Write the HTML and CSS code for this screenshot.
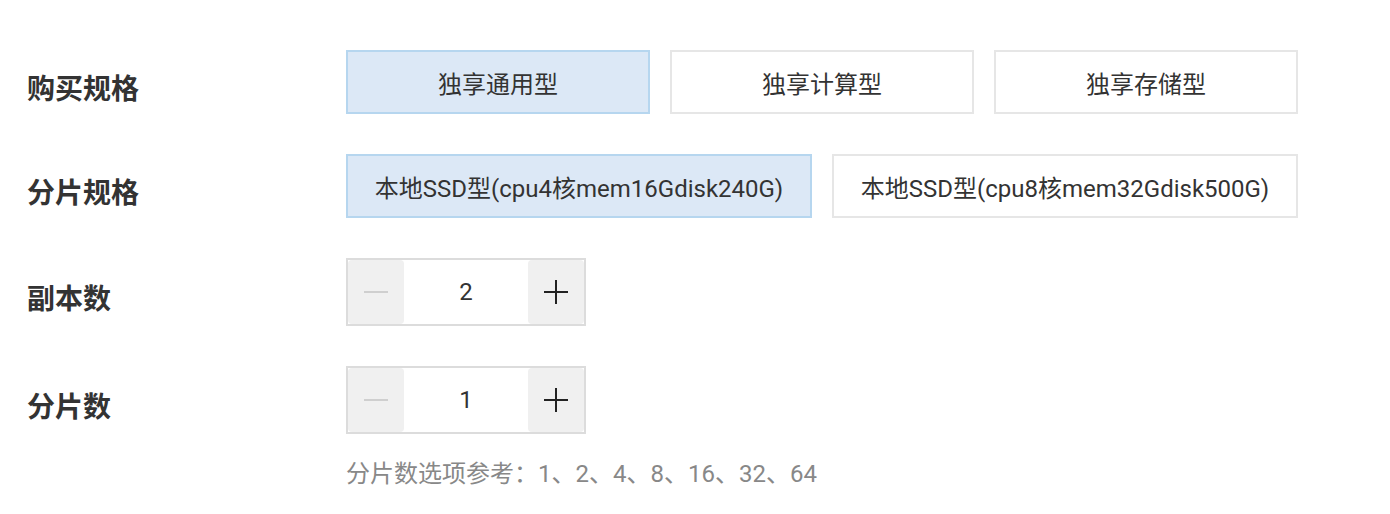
FILE: index.html
```html
<!DOCTYPE html>
<html>
<head>
  <title>实例规格</title>
  <link rel="stylesheet" href="styles.css">
</head>
<body>
  <div class="spec-form">
    <div class="form-row">
      <div class="form-label">购买规格</div>
      <div class="option-group">
        <div class="option selected">独享通用型</div>
        <div class="option">独享计算型</div>
        <div class="option">独享存储型</div>
      </div>
    </div>

    <div class="form-row">
      <div class="form-label">分片规格</div>
      <div class="option-group">
        <div class="option wide selected">本地SSD型(cpu4核mem16Gdisk240G)</div>
        <div class="option wide">本地SSD型(cpu8核mem32Gdisk500G)</div>
      </div>
    </div>

    <div class="form-row">
      <div class="form-label">副本数</div>
      <div class="stepper">
        <span class="step-btn minus"><span class="bar"></span></span>
        <span class="step-value">2</span>
        <span class="step-btn plus"><span class="bar"></span><span class="bar vertical"></span></span>
      </div>
    </div>

    <div class="form-row">
      <div class="form-label">分片数</div>
      <div class="stepper">
        <span class="step-btn minus"><span class="bar"></span></span>
        <span class="step-value">1</span>
        <span class="step-btn plus"><span class="bar"></span><span class="bar vertical"></span></span>
      </div>
    </div>

    <p class="form-hint">分片数选项参考：1、2、4、8、16、32、64</p>
  </div>
</body>
</html>
```

FILE: styles.css
```css
body {
  font-family: Roboto, "Noto Sans CJK SC", sans-serif;
  margin: 0;
  padding: 0;
  background-color: #fff;
  color: #333;
}

.spec-form {
  padding-top: 50px;
}

.form-row {
  display: flex;
  align-items: center;
  margin-bottom: 40px;
}

.form-label {
  width: 319px;
  padding-left: 27px;
  padding-top: 10px;
  font-size: 28px;
  font-weight: bold;
  color: #333;
}

.option-group {
  display: flex;
  gap: 20px;
}

.option {
  width: 304px;
  height: 64px;
  box-sizing: border-box;
  border: 2px solid #e6e6e6;
  background-color: #fff;
  display: flex;
  align-items: center;
  justify-content: center;
  font-size: 24px;
  color: #333;
}

.option.wide {
  width: 466px;
}

.option.selected {
  background-color: #dce8f6;
  border-color: #b6d6ef;
}

.stepper {
  display: flex;
  width: 240px;
  height: 68px;
  box-sizing: border-box;
  border: 2px solid #dcdcdc;
}

.step-btn {
  position: relative;
  width: 56px;
  background-color: #f0f0f0;
  border-radius: 4px;
}

.step-btn .bar {
  position: absolute;
  left: 16px;
  top: 31px;
  width: 24px;
  height: 2px;
  background-color: #222;
}

.step-btn .bar.vertical {
  left: 27px;
  top: 20px;
  width: 2px;
  height: 24px;
}

.step-btn.minus .bar {
  background-color: #cfcfcf;
}

.step-value {
  flex: 1;
  display: flex;
  align-items: center;
  justify-content: center;
  font-size: 24px;
  color: #333;
}

.form-hint {
  margin: -20px 0 0 346px;
  font-size: 24px;
  color: #888;
}
```
